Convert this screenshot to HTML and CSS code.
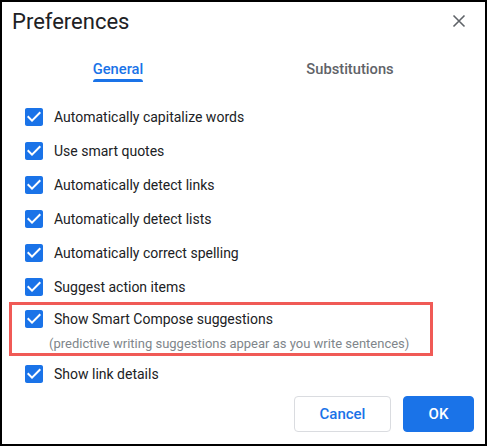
FILE: index.html
```html
<!DOCTYPE html>
<html>
<head>
<meta charset="utf-8">
<link rel="stylesheet" href="styles.css">
</head>
<body>
<div class="dialog">
  <div class="header">
    <div class="title">Preferences</div>
    <svg class="close" width="24" height="24" viewBox="0 0 24 24"><path d="M6.5 6.5L17.5 17.5M17.5 6.5L6.5 17.5" stroke="#5f6368" stroke-width="1.6" fill="none"/></svg>
  </div>
  <div class="tabs">
    <div class="tab active"><div class="tab-label">General<div class="tab-ind"></div></div></div>
    <div class="tab"><div class="tab-label">Substitutions</div></div>
  </div>
  <div class="list">
    <div class="row"><svg class="cb" width="24" height="24" viewBox="0 0 24 24"><path d="M19 3H5c-1.11 0-2 .9-2 2v14c0 1.1.89 2 2 2h14c1.11 0 2-.9 2-2V5c0-1.1-.89-2-2-2zm-9 14l-5-5 1.41-1.41L10 14.17l7.590-7.59L19 8l-9 9z"/></svg><span>Automatically capitalize words</span></div>
    <div class="row"><svg class="cb" width="24" height="24" viewBox="0 0 24 24"><path d="M19 3H5c-1.11 0-2 .9-2 2v14c0 1.1.89 2 2 2h14c1.11 0 2-.9 2-2V5c0-1.1-.89-2-2-2zm-9 14l-5-5 1.41-1.41L10 14.17l7.590-7.59L19 8l-9 9z"/></svg><span>Use smart quotes</span></div>
    <div class="row"><svg class="cb" width="24" height="24" viewBox="0 0 24 24"><path d="M19 3H5c-1.11 0-2 .9-2 2v14c0 1.1.89 2 2 2h14c1.11 0 2-.9 2-2V5c0-1.1-.89-2-2-2zm-9 14l-5-5 1.41-1.41L10 14.17l7.590-7.59L19 8l-9 9z"/></svg><span>Automatically detect links</span></div>
    <div class="row"><svg class="cb" width="24" height="24" viewBox="0 0 24 24"><path d="M19 3H5c-1.11 0-2 .9-2 2v14c0 1.1.89 2 2 2h14c1.11 0 2-.9 2-2V5c0-1.1-.89-2-2-2zm-9 14l-5-5 1.41-1.41L10 14.17l7.590-7.59L19 8l-9 9z"/></svg><span>Automatically detect lists</span></div>
    <div class="row"><svg class="cb" width="24" height="24" viewBox="0 0 24 24"><path d="M19 3H5c-1.11 0-2 .9-2 2v14c0 1.1.89 2 2 2h14c1.11 0 2-.9 2-2V5c0-1.1-.89-2-2-2zm-9 14l-5-5 1.41-1.41L10 14.17l7.590-7.59L19 8l-9 9z"/></svg><span>Automatically correct spelling</span></div>
    <div class="row"><svg class="cb" width="24" height="24" viewBox="0 0 24 24"><path d="M19 3H5c-1.11 0-2 .9-2 2v14c0 1.1.89 2 2 2h14c1.11 0 2-.9 2-2V5c0-1.1-.89-2-2-2zm-9 14l-5-5 1.41-1.41L10 14.17l7.590-7.59L19 8l-9 9z"/></svg><span>Suggest action items</span></div>
    <div class="item highlight">
      <div class="row short"><svg class="cb" width="24" height="24" viewBox="0 0 24 24"><path d="M19 3H5c-1.11 0-2 .9-2 2v14c0 1.1.89 2 2 2h14c1.11 0 2-.9 2-2V5c0-1.1-.89-2-2-2zm-9 14l-5-5 1.41-1.41L10 14.17l7.590-7.59L19 8l-9 9z"/></svg><span>Show Smart Compose suggestions</span></div>
      <div class="sub">(predictive writing suggestions appear as you write sentences)</div>
    </div>
    <div class="row"><svg class="cb" width="24" height="24" viewBox="0 0 24 24"><path d="M19 3H5c-1.11 0-2 .9-2 2v14c0 1.1.89 2 2 2h14c1.11 0 2-.9 2-2V5c0-1.1-.89-2-2-2zm-9 14l-5-5 1.41-1.41L10 14.17l7.590-7.59L19 8l-9 9z"/></svg><span>Show link details</span></div>
  </div>
  <div class="footer">
    <button class="btn cancel">Cancel</button>
    <button class="btn ok">OK</button>
  </div>
</div>
</body>
</html>
```

FILE: styles.css
```css
* { box-sizing: border-box; }
html, body { margin: 0; padding: 0; background: #fff; }
body { font-family: Roboto, "Noto Sans", Arial, sans-serif; color: #202124; }
.dialog {
  width: 487px;
  height: 446px;
  border: 2px solid #000;
  background: #fff;
  display: flex;
  flex-direction: column;
}
.header {
  display: flex;
  justify-content: space-between;
  align-items: flex-start;
  padding: 6px 14px 0 10px;
}
.title {
  font-size: 22px;
  line-height: 28px;
  color: #202124;
}
.close { margin-top: 1px; display: block; }
.tabs {
  margin-top: 23px;
  width: 464px;
  display: grid;
  grid-template-columns: 1fr 1fr;
}
.tab { display: flex; justify-content: center; }
.tab-label {
  font-size: 14.7px;
  font-weight: 500;
  line-height: 20px;
  color: #5f6368;
  padding: 0 4px;
  display: flex;
  flex-direction: column;
  align-items: center;
}
.tab.active .tab-label { color: #1a73e8; }
.tab-ind {
  width: 100%;
  height: 3px;
  background: #1a73e8;
  border-radius: 3px 3px 0 0;
}
.list {
  margin-top: 18px;
  display: flex;
  flex-direction: column;
}
.row {
  height: 34px;
  display: flex;
  align-items: center;
  padding-left: 20px;
  font-size: 14px;
  color: #202124;
}
.row.short { height: 30px; }
.cb { fill: #1a73e8; display: block; margin-right: 8px; flex: none; }
.item { position: relative; margin-bottom: 4px; }
.highlight::before {
  content: "";
  position: absolute;
  top: -2px;
  bottom: -3px;
  left: 7px;
  width: 418px;
  border: 3px solid #f05a56;
}
.sub {
  padding-left: 47px;
  font-size: 13px;
  line-height: 19px;
  color: #80868b;
}
.footer {
  margin-top: 5px;
  display: flex;
  justify-content: flex-end;
  gap: 12px;
  padding-right: 11px;
}
.btn {
  height: 36px;
  font-family: Roboto, "Noto Sans", Arial, sans-serif;
  font-size: 15px;
  font-weight: 500;
  border-radius: 4px;
  padding: 0;
  cursor: pointer;
}
.cancel {
  width: 97px;
  background: #fff;
  color: #1a73e8;
  border: 1px solid #dadce0;
}
.ok {
  width: 71px;
  background: #1a73e8;
  color: #fff;
  border: 1px solid #1a73e8;
}
```
